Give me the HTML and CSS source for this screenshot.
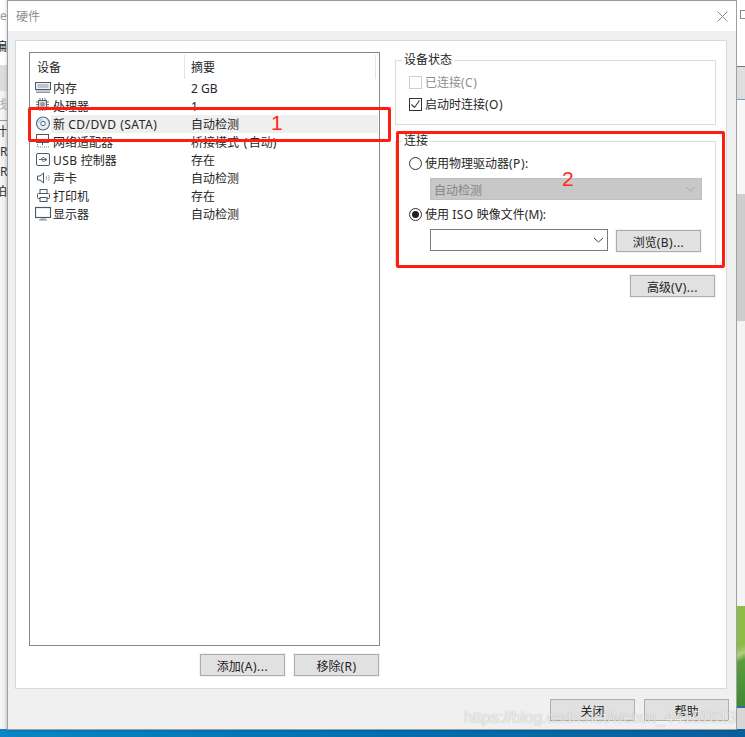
FILE: index.html
```html
<!DOCTYPE html>
<html lang="zh-CN">
<head>
    <meta charset="UTF-8">
    <title>硬件</title>
    <link rel="stylesheet" href="styles.css">
</head>
<body>
    <div class="desktop">
        <div class="back-left">
            <div class="bl-e">e</div>
            <div class="bl-menu"><span class="bl-cut">偏</span></div>
            <div class="bl-tab"></div>
            <div class="bl-tool"><span class="bl-cut">线</span></div>
            <div class="bl-text">
                <span class="bl-cut">计</span>
                <span>RI</span>
                <span>Re</span>
                <span class="bl-cut">拍</span>
            </div>
        </div>

        <div class="dialog">
            <div class="titlebar">
                <span class="title">硬件</span>
                <svg class="close-x" width="11" height="11" viewBox="0 0 11 11"><path d="M0.500 0.500l10 10M10.500 0.500l-10 10" stroke="#8a8a8a" stroke-width="1" fill="none"/></svg>
            </div>
            <div class="dialog-body">
                <div class="panel">
                    <div class="left-col">
                        <div class="device-list">
                            <div class="list-head">
                                <span class="head-name">设备</span>
                                <span class="head-sum">摘要</span>
                            </div>
                            <div class="row">
                                <svg class="icon" viewBox="0 0 18 18"><rect x="0.500" y="3.500" width="15" height="7" fill="#eef1f3" stroke="#4a5a68"/><path d="M2.500 6h11M2.500 8h11" stroke="#8d99a3"/><path d="M1 12h14M1 13.500h14" stroke="#8a96a0"/></svg>
                                <span class="name">内存</span><span class="sum">2 GB</span>
                            </div>
                            <div class="row">
                                <svg class="icon" viewBox="0 0 18 18"><rect x="3.500" y="3.500" width="8" height="8" fill="#d5d9dc" stroke="#56626c"/><rect x="5.500" y="5.500" width="4" height="4" fill="#8c979f"/><path d="M5 1v2M7.500 1v2M10 1v2M5 12v2M7.500 12v2M10 12v2M1 5h2M1 7.500h2M1 10h2M12 5h2M12 7.500h2M12 10h2" stroke="#6a7680"/></svg>
                                <span class="name">处理器</span><span class="sum">1</span>
                            </div>
                            <div class="row selected">
                                <svg class="icon" viewBox="0 0 18 18"><circle cx="8" cy="8.500" r="6.500" fill="#e6eef3" stroke="#4d6f88" stroke-width="1.200"/><circle cx="8" cy="8.500" r="2.200" fill="#fff" stroke="#3f6a8a"/><path d="M3.800 7.500A4.300 4.300 0 0 1 7 4.300" stroke="#9fb6c6" fill="none"/></svg>
                                <span class="name">新 <span class="en">CD/DVD (SATA)</span></span><span class="sum">自动检测</span>
                            </div>
                            <div class="row">
                                <svg class="icon" viewBox="0 0 18 18"><rect x="1.500" y="1.500" width="12" height="8" fill="#fff" stroke="#4a5a68"/><path d="M7.500 10v2" stroke="#4a5a68"/><path d="M3 14h12" stroke="#7c8892" stroke-dasharray="1 1"/><path d="M2.500 11v3" stroke="#7c8892" stroke-dasharray="1 1"/></svg>
                                <span class="name">网络适配器</span><span class="sum">桥接模式<span class="loose"> (</span>自动<span class="loose">)</span></span>
                            </div>
                            <div class="row">
                                <svg class="icon" viewBox="0 0 18 18"><rect x="1.500" y="2.500" width="13" height="12" rx="1.500" fill="#fff" stroke="#4a5a68"/><path d="M4 8.500h8M12 8.500l-2-1.300v2.600zM6 8.500l1.800-2h1.500M6.500 8.500l1.500 2h1.300" stroke="#5e6c78" fill="none"/></svg>
                                <span class="name"><span class="en">USB</span> 控制器</span><span class="sum">存在</span>
                            </div>
                            <div class="row">
                                <svg class="icon" viewBox="0 0 18 18"><path d="M2.500 7h2.500l3.500-3v10L5 11H2.500z" fill="#fff" stroke="#4a5a68"/><path d="M11 7c1 1 1 3 0 4M13 6c1.500 2 1.500 4 0 6" stroke="#9aa5ae" fill="none"/></svg>
                                <span class="name">声卡</span><span class="sum">自动检测</span>
                            </div>
                            <div class="row">
                                <svg class="icon" viewBox="0 0 18 18"><rect x="5" y="2.500" width="7" height="4" fill="#fff" stroke="#4a5a68"/><rect x="2.500" y="6.500" width="12" height="5" rx="1" fill="#fff" stroke="#4a5a68"/><rect x="5" y="10.500" width="7" height="4" fill="#fff" stroke="#4a5a68"/></svg>
                                <span class="name">打印机</span><span class="sum">存在</span>
                            </div>
                            <div class="row">
                                <svg class="icon" viewBox="0 0 18 18"><rect x="0.500" y="2.500" width="15" height="10" fill="#fff" stroke="#4a5a68" stroke-width="1.200"/><path d="M5.500 14h5M4 15h8" stroke="#7c8892"/></svg>
                                <span class="name">显示器</span><span class="sum">自动检测</span>
                            </div>
                        </div>
                        <div class="list-buttons">
                            <button class="btn">添加<span class="en">(A)...</span></button>
                            <button class="btn">移除<span class="en">(R)</span></button>
                        </div>
                    </div>

                    <div class="right-col">
                        <fieldset class="group status-group">
                            <legend>设备状态</legend>
                            <label class="opt disabled"><span class="check"></span>已连接<span class="en">(C)</span></label>
                            <label class="opt opt-second">
                                <span class="check on"><svg width="11" height="11" viewBox="0 0 11 11"><path d="M1.500 5.500l3 3 5-7" stroke="#333" stroke-width="1.100" fill="none"/></svg></span>启动时连接<span class="en">(O)</span>
                            </label>
                        </fieldset>
                        <fieldset class="group connect-group">
                            <legend>连接</legend>
                            <label class="opt"><span class="radio"></span>使用物理驱动器<span class="en">(P):</span></label>
                            <div class="drive-select">
                                <span class="drive-text">自动检测</span>
                                <svg width="11" height="6" viewBox="0 0 11 6"><path d="M1 1l4.500 4L10 1" stroke="#a8a8a8" fill="none"/></svg>
                            </div>
                            <label class="opt opt-iso"><span class="radio on"></span>使用 <span class="en">ISO</span> 映像文件(M):</label>
                            <div class="iso-row">
                                <div class="iso-combo">
                                    <svg width="11" height="6" viewBox="0 0 11 6"><path d="M1 1l4.500 4L10 1" stroke="#444" fill="none"/></svg>
                                </div>
                                <button class="btn browse">浏览<span class="en">(B)...</span></button>
                            </div>
                        </fieldset>
                        <div class="advanced-row">
                            <button class="btn">高级<span class="en">(V)...</span></button>
                        </div>
                    </div>
                </div>
                <div class="dialog-footer">
                    <button class="btn">关闭</button>
                    <button class="btn">帮助</button>
                </div>
            </div>
        </div>

        <div class="back-right">
            <div class="br-top"><span class="br-max"></span></div>
            <div class="br-tool"></div>
            <div class="br-light"></div>
            <div class="br-scroll"></div>
            <div class="br-rest"></div>
            <div class="br-green"></div>
            <div class="br-bottom"></div>
        </div>
    </div>
    <div class="taskbar"></div>

    <!-- annotations drawn on top of the screenshot -->
    <div class="mark mark-one"></div>
    <div class="mark mark-two"></div>
    <span class="mark-num num-one">1</span>
    <span class="mark-num num-two">2</span>
    <span class="watermark">https://blog.csdn.net/weixin_44151813</span>
</body>
</html>
```

FILE: styles.css
```css
* {
    box-sizing: border-box;
}
html, body {
    margin: 0;
    padding: 0;
}
body {
    position: relative;
    width: 745px;
    height: 737px;
    overflow: hidden;
    font-family: "Noto Sans", "Noto Sans CJK SC", sans-serif;
    font-size: 12px;
    color: #262626;
    background: #f0f0f0;
}
.desktop {
    display: flex;
    height: 729px;
}
.taskbar {
    height: 8px;
    background: linear-gradient(90deg, #0a86c4, #0070b0 50%, #0a5f9c);
}
.en {
    letter-spacing: 0.5px;
}
.loose {
    letter-spacing: 1.5px;
}

/* windows behind the dialog */
.back-left {
    width: 7px;
    overflow: hidden;
    background: linear-gradient(90deg, #f7f7f7, #e8e8e8);
    font-size: 12px;
    line-height: 16px;
    white-space: nowrap;
    color: #555;
}
.bl-cut {
    display: block;
    margin-left: -5px;
}
.bl-e {
    height: 31px;
    padding-top: 8px;
    background: #fff;
    color: #999;
}
.bl-menu {
    height: 34px;
    padding-top: 8px;
    background: #fff;
    color: #222;
}
.bl-tab {
    height: 26px;
    background: #dcdcdc;
}
.bl-tool {
    height: 30px;
    padding-top: 6px;
    border-bottom: 1px solid #999;
    color: #aaa;
}
.bl-text {
    display: flex;
    flex-direction: column;
    gap: 4px;
    padding-top: 3px;
    color: #333;
}
.back-right {
    width: 8px;
    display: flex;
    flex-direction: column;
}
.br-top {
    height: 67px;
    padding-top: 10px;
    background: #fff;
    border-bottom: 1px solid #777;
}
.br-max {
    display: block;
    width: 10px;
    height: 9px;
    margin-left: 3px;
    border: 1px solid #888;
}
.br-tool {
    height: 33px;
    background: #dedede;
    border-bottom: 1px solid #6aa6d0;
}
.br-light {
    height: 94px;
    background: #f7f7f7;
}
.br-scroll {
    height: 127px;
    background: #cdcdcd;
}
.br-rest {
    height: 285px;
    background: #f4f4f4;
}
.br-green {
    height: 102px;
    background: linear-gradient(155deg, #8cbb4a 40%, #b0cf80 48%, #5c9c40 55%, #3f8a35);
    border-bottom: 2px solid #2f6fa0;
}
.br-bottom {
    flex: 1;
    background: #d6d6d6;
}

/* dialog */
.dialog {
    width: 730px;
    height: 730px;
    display: flex;
    flex-direction: column;
    background: #f0f0f0;
    border: 1px solid #a0a0a0;
    border-top-color: #9a9a9a;
    box-shadow: 0 0 3px rgba(0, 0, 0, 0.25);
}
.titlebar {
    height: 30px;
    flex: none;
    display: flex;
    align-items: center;
    justify-content: space-between;
    padding: 0 8px;
    background: #fff;
}
.title {
    font-size: 12px;
    color: #8f8f8f;
}
.dialog-body {
    flex: 1;
    padding: 9px 9px 0 7px;
}
.panel {
    height: 649px;
    display: flex;
    gap: 15px;
    padding: 11px 0 0 13px;
    background: #fff;
    border: 1px solid #d9d9d9;
}
.left-col {
    width: 351px;
}
.device-list {
    height: 594px;
    border: 1px solid #828790;
    background: #fff;
}
.list-head {
    height: 26px;
    display: flex;
    align-items: center;
    padding-top: 1px;
}
.head-name {
    width: 155px;
    height: 24px;
    line-height: 26px;
    padding-left: 7px;
    border-right: 1px solid #e5e5e5;
}
.head-sum {
    flex: 1;
    height: 24px;
    line-height: 26px;
    padding-left: 6px;
    margin-right: 3px;
    border-right: 1px solid #e5e5e5;
}
.row {
    height: 18px;
    display: flex;
    align-items: center;
    padding-left: 5px;
    line-height: 18px;
}
.icon {
    width: 18px;
    height: 18px;
    flex: none;
}
.name {
    width: 138px;
    flex: none;
    padding-top: 2px;
    white-space: nowrap;
}
.sum {
    padding-top: 2px;
    white-space: nowrap;
}
.selected {
    background: linear-gradient(90deg, #fff 21px, #efefef 21px);
    margin-right: 1px;
}
.list-buttons {
    display: flex;
    justify-content: flex-end;
    gap: 9px;
    margin-top: 8px;
    padding-right: 1px;
}
.btn {
    width: 85px;
    height: 22px;
    padding: 2px 0 0;
    font: inherit;
    color: #222;
    background: #e1e1e1;
    border: 1px solid #adadad;
    box-shadow: 0 0 0 1px #f2f2f2;
}

/* right side */
.right-col {
    width: 321px;
    margin-top: 1px;
}
.group {
    margin: 0;
    min-width: 0;
    padding: 6px 13px 0;
    border: 1px solid #dcdcdc;
}
.group legend {
    margin-left: -7px;
    padding: 0 2px;
    line-height: 14px;
}
.status-group {
    height: 72px;
}
.connect-group {
    height: 132px;
    margin-top: 9px;
}
.opt {
    display: flex;
    align-items: center;
    height: 18px;
    padding-top: 2px;
    line-height: 16px;
    white-space: pre;
}
.opt-second {
    margin-top: 4px;
}
.opt-iso {
    margin-top: 5px;
}
.disabled {
    color: #8f8f8f;
}
.check {
    width: 13px;
    height: 13px;
    margin: -2px 3px 0 0;
    display: flex;
    align-items: center;
    justify-content: center;
    border: 1px solid #333;
    background: #fff;
}
.disabled .check {
    border-color: #cfcfcf;
}
.radio {
    position: relative;
    width: 13px;
    height: 13px;
    margin: -2px 3px 0 0;
    border: 1px solid #333;
    border-radius: 50%;
    background: #fff;
}
.radio.on::after {
    content: "";
    position: absolute;
    left: 2px;
    top: 2px;
    width: 7px;
    height: 7px;
    border-radius: 50%;
    background: #222;
}
.drive-select {
    width: 272px;
    height: 22px;
    margin: 6px 0 0 21px;
    display: flex;
    align-items: center;
    justify-content: space-between;
    padding: 0 5px 0 3px;
    color: #858585;
    background: #c8c8c8;
    border: 1px solid #bfbfbf;
}
.drive-text {
    padding-top: 2px;
}
.iso-row {
    display: flex;
    gap: 8px;
    margin: 6px 0 0 21px;
}
.iso-combo {
    width: 178px;
    height: 22px;
    display: flex;
    align-items: center;
    justify-content: flex-end;
    padding-right: 3px;
    background: #fff;
    border: 1px solid #7a7a7a;
}
.browse {
    margin-top: 1px;
}
.advanced-row {
    display: flex;
    justify-content: flex-end;
    margin-top: 9px;
    padding-right: 1px;
}
.dialog-footer {
    display: flex;
    justify-content: flex-end;
    gap: 9px;
    margin-top: 10px;
    margin-right: -2px;
}

/* annotations */
.mark {
    position: absolute;
    border: 3px solid #ff1c10;
    border-radius: 2px;
}
.mark-one {
    left: 28px;
    top: 107px;
    width: 363px;
    height: 35px;
}
.mark-two {
    left: 396px;
    top: 131px;
    width: 329px;
    height: 137px;
}
.mark-num {
    position: absolute;
    font-family: "Liberation Sans", sans-serif;
    font-size: 21px;
    line-height: 24px;
    color: #ff2a1a;
}
.num-one {
    left: 271px;
    top: 111px;
}
.num-two {
    left: 562px;
    top: 167px;
}
.watermark {
    position: absolute;
    left: 464px;
    top: 709px;
    font-family: "Liberation Sans", sans-serif;
    font-size: 16px;
    line-height: 18px;
    white-space: nowrap;
    color: rgba(255, 255, 255, 0.8);
    text-shadow: 0 0 1px rgba(0, 0, 0, 0.35);
}
```
